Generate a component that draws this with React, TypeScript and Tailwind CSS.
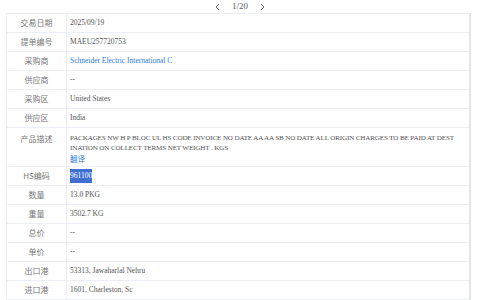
import React from "react";

const rows: { label: string; value: React.ReactNode; tall?: boolean }[] = [
  { label: "交易日期", value: "2025/09/19" },
  { label: "提单编号", value: "MAEU257720753" },
  { label: "采购商", value: <span className="text-[#2f7bd8]">Schneider Electric International C</span> },
  { label: "供应商", value: "--" },
  { label: "采购区", value: "United States" },
  { label: "供应区", value: "India" },
  {
    label: "产品描述",
    tall: true,
    value: (
      <div className="leading-[10px]">
        <div className="whitespace-nowrap text-[7.1px] tracking-[-0.15px]">
          PACKAGES NW H P BLOC UL HS CODE INVOICE NO DATE AA AA SB NO DATE ALL ORIGIN CHARGES TO BE PAID AT DEST
        </div>
        <div className="whitespace-nowrap text-[7.1px] tracking-[-0.15px]">INATION ON COLLECT TERMS NET WEIGHT . KGS</div>
        <div className="text-[#2f7bd8] mt-[1px]" style={{ fontFamily: '"Noto Sans CJK SC", sans-serif' }}>翻译</div>
      </div>
    ),
  },
  { label: "HS编码", value: <span className="bg-[#3f6fd1] text-white py-[1px]">961100</span> },
  { label: "数量", value: "13.0 PKG" },
  { label: "重量", value: "3502.7 KG" },
  { label: "总价", value: "--" },
  { label: "单价", value: "--" },
  { label: "出口港", value: "53313, Jawaharlal Nehru" },
  { label: "进口港", value: "1601, Charleston, Sc" },
];

export default function App() {
  return (
    <div className="w-[480px] h-[300px] overflow-hidden bg-white text-[#606266]">
      <div className="h-[13px] flex items-center justify-center gap-[8px] text-[9px] text-[#606266]" style={{ fontFamily: '"Liberation Serif", serif' }}>
        <svg width="8" height="8" viewBox="0 0 8 8" className="mr-[2px]"><path d="M5 1 L2 4 L5 7" stroke="#606266" strokeWidth="0.9" fill="none" /></svg>
        <span>1/20</span>
        <svg width="8" height="8" viewBox="0 0 8 8" className="ml-[2px]"><path d="M3 1 L6 4 L3 7" stroke="#606266" strokeWidth="0.9" fill="none" /></svg>
      </div>
      <div className="ml-[6px] w-[465px] border-t border-l border-[#ebeef5] border-r-2 border-r-[#e6e6e6]">
        {rows.map((r, i) => (
          <div key={i} className={`flex border-b border-[#ebeef5] ${r.tall ? "h-[39px]" : "h-[19px]"}`}>
            <div
              className={`w-[60px] shrink-0 border-r border-[#ebeef5] flex justify-center text-[8px] text-[#777] ${r.tall ? "items-start pt-[5px]" : "items-center"}`}
              style={{ fontFamily: '"Noto Sans CJK SC", sans-serif' }}
            >
              {r.label}
            </div>
            <div
              className={`flex-1 pl-[3px] pr-[10px] text-[7.5px] text-[#555] ${r.tall ? "pt-[5px]" : "flex items-center"}`}
              style={{ fontFamily: '"Liberation Serif", serif' }}
            >
              {r.value}
            </div>
          </div>
        ))}
      </div>
    </div>
  );
}
